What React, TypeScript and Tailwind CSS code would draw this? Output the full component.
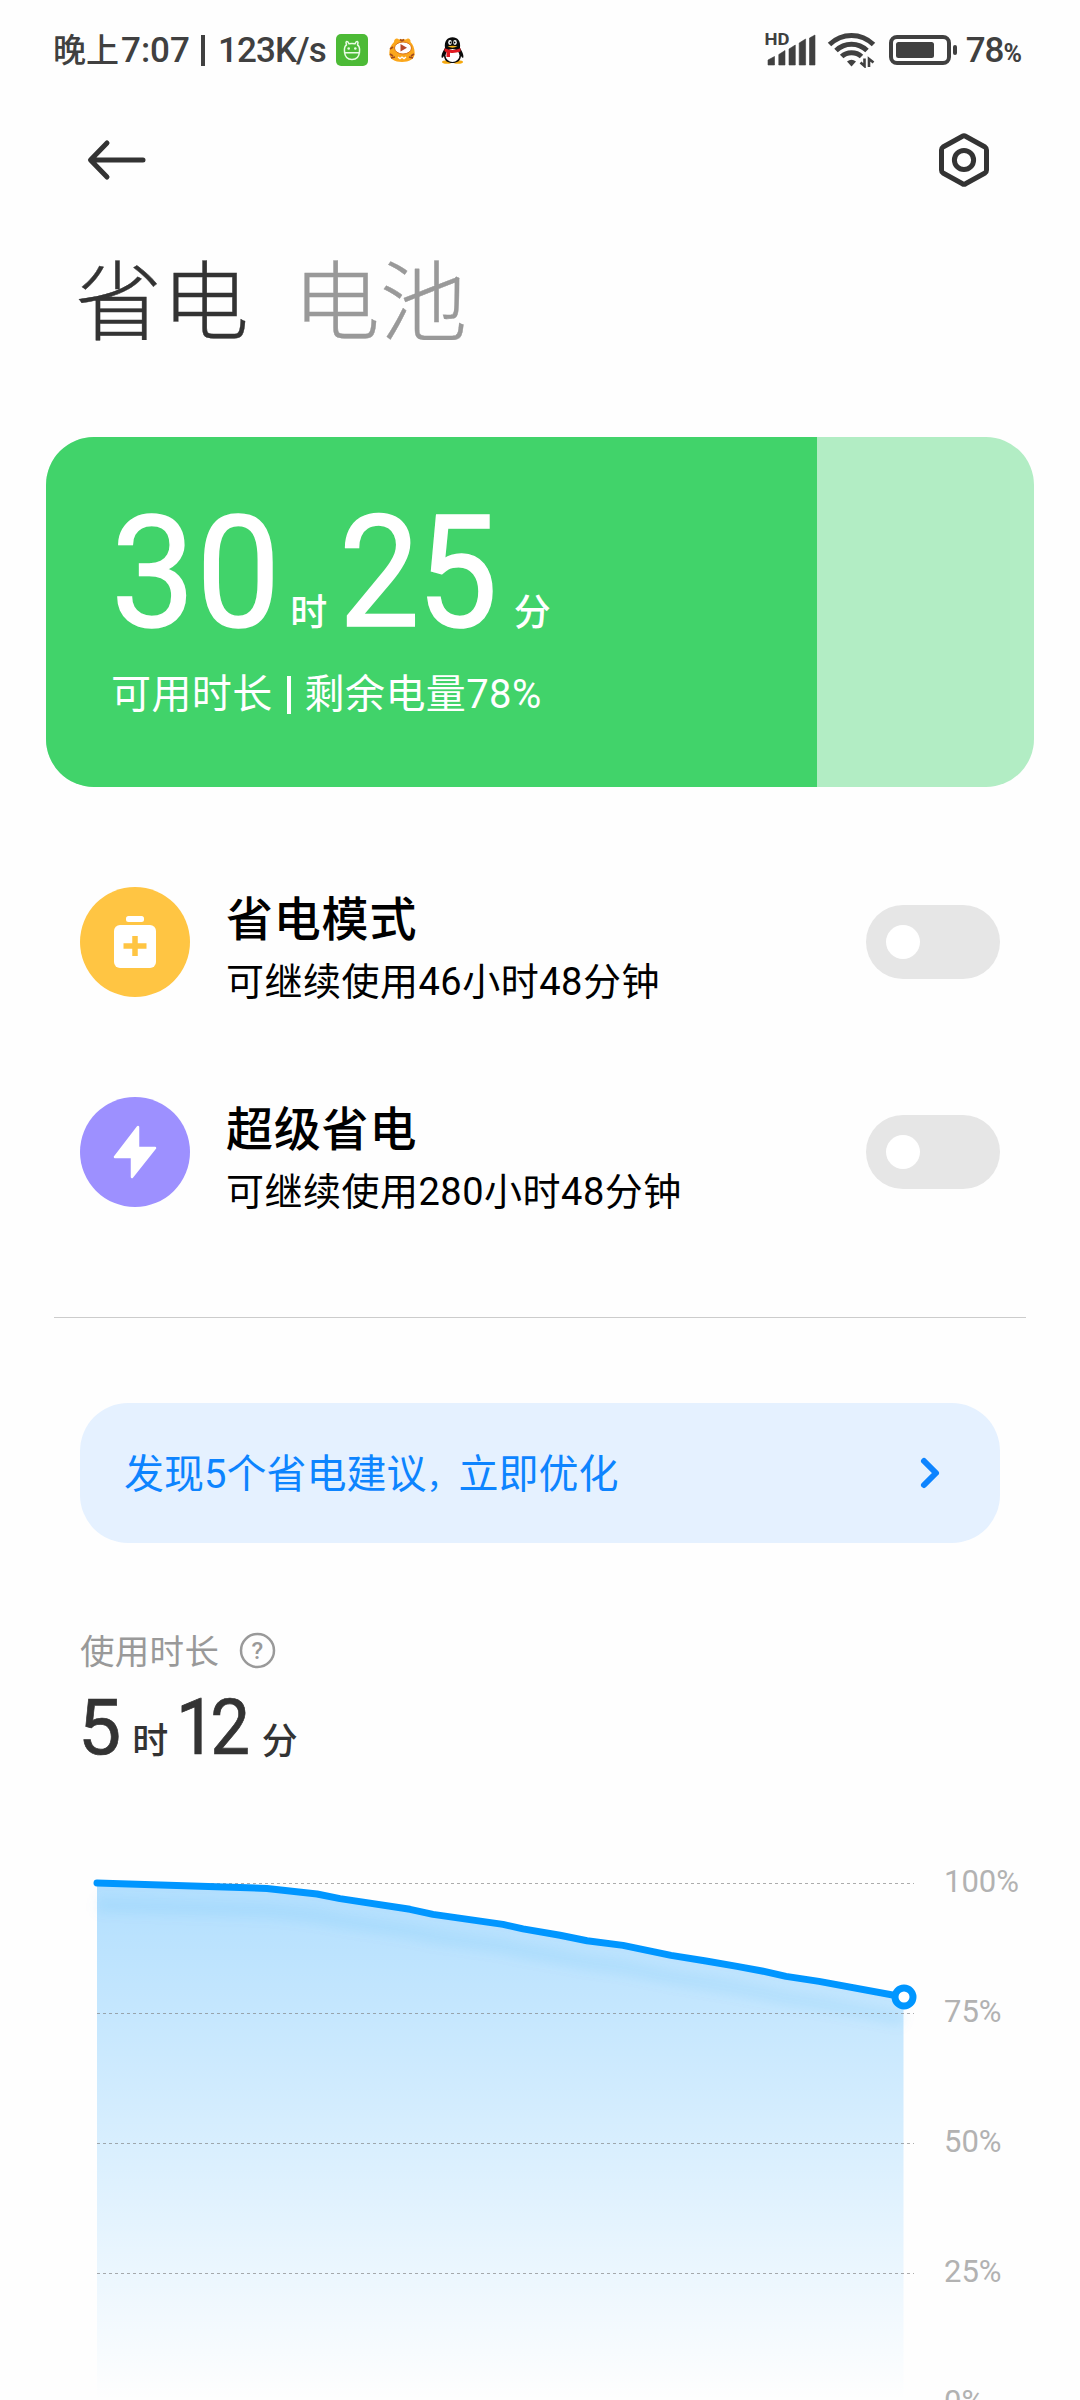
import { useState } from "react"

const points = [
  [97, 1883], [267, 1888.4], [317, 1894], [340, 1898.6], [410, 1909.3], [433, 1914.4],
  [503, 1924.4], [523, 1928.9], [560, 1935.3], [587, 1940.7], [623, 1945.4], [671, 1955.4],
  [706, 1961], [737, 1966.4], [762, 1971], [786, 1976.4], [819, 1981.4], [903.5, 1997],
]

const linePath = "M" + points.map(([x, y]) => `${x} ${y}`).join("L")

const gridLines = [1883.5, 2013.5, 2143.5, 2273.5]

function StatusBar() {
  return (
    <div className="flex h-[100px] items-center pl-[53px] pr-[58px] text-[#404040]">
      <div className="flex items-center text-[35px] font-medium leading-none whitespace-pre">
        <span className="text-[33px]">晚上</span>
        <span className="ml-[2px]">7:07</span>
        <span className="ml-[11px] h-[31px] w-[4px] bg-[#404040]" />
        <span className="ml-[13px] tracking-[-0.9px]">123K/s</span>
      </div>

      {/* Notification icons */}
      <svg className="ml-[10px]" width="32" height="32" viewBox="0 0 32 32">
        <rect width="32" height="32" rx="5" fill="#4CBA36" />
        <g fill="none" stroke="#E9FBE5" strokeWidth="1.5" strokeLinecap="round" strokeLinejoin="round">
          <path d="M8.500 17.500Q8 12.500 10.500 11L10 8.500Q10.500 6.800 12 8L13 9.800Q16 9 19 9.800L20 8Q21.500 6.800 22 8.500L21.500 11Q24 12.500 23.500 17.500Q23 25.500 16 25.500Q9 25.500 8.500 17.500Z" />
          <path d="M8.500 18.800H23.500" />
        </g>
        <circle cx="12.700" cy="14.500" r="1.300" fill="#E9FBE5" />
        <circle cx="19.300" cy="14.500" r="1.300" fill="#E9FBE5" />
      </svg>
      <svg className="ml-[21px]" width="26" height="26" viewBox="0 0 26 26">
        <path d="M5 5C5 1.500 8 .5 10 2.500C12 2 14 2 17 2.500C19 .5 22 2 21.500 5C24 7.500 25.500 11 25.700 16C26 22 20 25 13 25C6 25 0 22 .3 16C.5 11 2 8 5 5Z" fill="#FBA71B" />
        <path d="M4 10L1 12M1 17L4 19M25 17L22 19M2 21L6 20M24 21L20 20M11 2.500L13 4L15 2.500" stroke="#A14A1C" strokeWidth="1.600" fill="none" />
        <ellipse cx="14" cy="11" rx="8.500" ry="6" fill="#fff" stroke="#D9741C" strokeWidth="1" />
        <path d="M11.500 7L18 10.800L11.500 14.500Z" fill="#B5472A" />
        <path d="M9 20L11 21.500L13 20L15 21.500L17 20" stroke="#fff" strokeWidth="1.400" fill="none" />
      </svg>
      <svg className="ml-[26px]" width="23" height="27" viewBox="0 0 23 27">
        <ellipse cx="6" cy="25" rx="5" ry="1.800" fill="#F5A90F" />
        <ellipse cx="17" cy="25" rx="5" ry="1.800" fill="#F5A90F" />
        <path d="M4 11C3 4 6.500 .3 11.500 .3C16.500 .3 20 4 19 11C21 14 23 18 22.300 20.500C22 21.500 20.500 20 20 19C19.500 24 16 26 11.500 26C7 26 3.500 24 3 19C2.500 20 1 21.500 .7 20.500C0 18 2 14 4 11Z" fill="#0A0A0A" />
        <ellipse cx="11.500" cy="18.500" rx="7" ry="6.500" fill="#fff" />
        <ellipse cx="9" cy="5.500" rx="1.800" ry="2.400" fill="#fff" />
        <ellipse cx="14" cy="5.500" rx="1.800" ry="2.400" fill="#fff" />
        <circle cx="9.500" cy="5.500" r=".9" />
        <circle cx="13.600" cy="5.500" r=".9" />
        <path d="M6.500 9.300Q11.500 8 16.500 9.300Q11.500 12 6.500 9.300Z" fill="#F5B51B" />
        <path d="M3.500 11.300Q11.500 14.500 19.500 11.300V14.500Q14 16.500 9 15.800V20H5.500V15Q4 14.800 3.500 14Z" fill="#E01B22" />
      </svg>

      {/* Signal, wifi, battery */}
      <div className="ml-auto flex items-center">
        <svg width="54" height="40" viewBox="-3 -4 54 40" fill="#404040">
          <text x="-1.500" y="11" fontSize="17" fontWeight="700" textLength="25" lengthAdjust="spacingAndGlyphs">HD</text>
          <path d="M2 31V26L8.500 22.500V31ZM12.800 31V20.500L19 16.500V31ZM23 31V15L29.300 11V31ZM33.200 31V9L39.600 5V31ZM43.500 31V4L49 1V31Z" stroke="#404040" strokeWidth=".6" strokeLinejoin="round" />
        </svg>
        <svg className="ml-[10px]" width="50" height="36" viewBox="0 0 50 36">
          <g fill="none" stroke="#404040" strokeWidth="5">
            <path d="M2.500 12.500Q12 3.500 24.500 3.500T46.500 12.500" />
            <path d="M9 18.500Q15.500 12.200 24.500 12.200T40 18.500" />
            <path d="M14.700 24.500Q18.500 20.700 24.500 20.700T34.500 24.500" />
          </g>
          <path d="M20 29.500Q24.500 26 29 29.500L24.500 34.500Z" fill="#404040" />
          <path d="M37.500 26.500V34L33.500 30.500M42 35V27L46.500 30.500" fill="none" stroke="#404040" strokeWidth="2.600" />
        </svg>
        <svg className="ml-[11px]" width="70" height="32" viewBox="0 0 70 32">
          <rect x="3" y="3" width="58" height="26" rx="6" fill="none" stroke="#404040" strokeWidth="4" />
          <rect x="8" y="8" width="38" height="16" rx="2.500" fill="#404040" />
          <rect x="65" y="11" width="4" height="10" rx="2" fill="#404040" />
        </svg>
        <div className="ml-[8px] flex items-baseline font-medium leading-none">
          <span className="text-[35px] tracking-[-1px]">78</span>
          <span className="text-[25px] font-bold">%</span>
        </div>
      </div>
    </div>
  )
}

function Toggle({ label }: { label: string }) {
  const [on, setOn] = useState(false)

  return (
    <button
      role="switch"
      aria-checked={on}
      aria-label={label}
      onClick={() => setOn(!on)}
      className={`mt-[18px] ml-auto flex h-[74px] w-[134px] items-center rounded-full px-[20px] ${
        on ? "justify-end bg-[#0D84FF]" : "justify-start bg-[#E6E6E6]"
      }`}
    >
      <span className="h-[34px] w-[34px] rounded-full bg-white" />
    </button>
  )
}

function ModeRow({ icon, title, desc }: { icon: React.ReactNode; title: string; desc: string }) {
  return (
    <div className="flex h-[110px] items-start px-[80px] mt-[100px] text-black">
      {icon}
      <div className="ml-[36px] pt-[2px]">
        <h3 className="text-[47px] font-medium leading-[62px] tracking-[0.8px]">{title}</h3>
        <p className="text-[38px] leading-[62px] tracking-[0.5px]">{desc}</p>
      </div>
      <Toggle label={title} />
    </div>
  )
}

function BatteryCard() {
  return (
    <div className="mx-[46px] flex h-[350px] overflow-hidden rounded-[48px] bg-[#B2EDC4]">
      <div className="w-[78%] bg-[#41D36A] pt-[58px] pl-[65px] text-white whitespace-nowrap">
        <div className="flex items-baseline text-[156px] leading-[156px]">
          <span className="origin-left scale-x-[0.96] tracking-[1px] [-webkit-text-stroke:1.5px_white]">30</span>
          <span className="ml-[2px] text-[37px] leading-none font-medium">时</span>
          <span className="ml-[12px] origin-left scale-x-[0.92] tracking-[-3px] [-webkit-text-stroke:1.5px_white]">25</span>
          <span className="ml-[5px] text-[37px] leading-none font-medium">分</span>
        </div>
        <div className="mt-[24px] flex items-center text-[40px] leading-[40px] tracking-[0.4px]">
          <span>可用时长</span>
          <span className="mx-[14px] h-[38px] w-[4px] bg-white" />
          <span>剩余电量78%</span>
        </div>
      </div>
    </div>
  )
}

function UsageChart() {
  return (
    <div className="mt-[93px] flex">
      <svg className="ml-[80px] shrink-0" width="850" height="540" viewBox="80 1860 850 540">
        <defs>
          <linearGradient id="area" gradientUnits="userSpaceOnUse" x1="0" y1="1883" x2="0" y2="2400">
            <stop offset="0" stopColor="#0096FF" stopOpacity=".3" />
            <stop offset="1" stopColor="#0096FF" stopOpacity="0" />
          </linearGradient>
          <filter id="glow" filterUnits="userSpaceOnUse" x="80" y="1860" width="850" height="200">
            <feGaussianBlur stdDeviation="6" />
          </filter>
        </defs>
        <path d={`${linePath}V2400H97Z`} fill="url(#area)" />
        <path d={linePath} transform="translate(0 22)" fill="none" stroke="#0096E6" strokeOpacity=".08" strokeWidth="14" filter="url(#glow)" />
        {gridLines.map((y) => (
          <line key={y} x1="97" x2="914" y1={y} y2={y} stroke="#808080" strokeOpacity=".65" strokeDasharray="3 3" />
        ))}
        <path d={linePath} fill="none" stroke="#0096FF" strokeWidth="7" strokeLinecap="round" strokeLinejoin="round" />
        <circle cx="904" cy="1997" r="9" fill="#fff" stroke="#0096FF" strokeWidth="7" />
      </svg>
      <div className="ml-[14px] text-[31px] leading-[44px] text-[#B2B2B2]">
        {["100%", "75%", "50%", "25%", "0%"].map((label) => (
          <div key={label} className="h-[130px]">{label}</div>
        ))}
      </div>
    </div>
  )
}

export default function App() {
  return (
    <div className="h-[2400px] w-[1080px] overflow-hidden bg-[#FEFEFE] font-['Roboto','Noto_Sans_CJK_SC',sans-serif] text-[#333]">
      <StatusBar />

      {/* Header */}
      <div className="flex h-[120px] items-center justify-between pl-[86px] pr-[88px]">
        <svg width="62" height="44" viewBox="0 0 62 44" fill="none" stroke="#333" strokeWidth="5" strokeLinecap="round" strokeLinejoin="round">
          <path d="M57 22H5M21 5L4.500 22L21 39" />
        </svg>
        <svg width="56" height="60" viewBox="0 0 56 60" fill="none" stroke="#333" strokeWidth="5" strokeLinejoin="round">
          <path d="M26.500 6.200Q28 5.200 29.500 6.200L49 17Q50.500 18 50.500 20V40Q50.500 42 49 43L29.500 53.800Q28 54.800 26.500 53.800L7 43Q5.500 42 5.500 40V20Q5.500 18 7 17Z" />
          <circle cx="28" cy="30" r="9.600" />
        </svg>
      </div>

      <div className="flex h-[217px] gap-[44px] pl-[75px] text-[87px] font-light leading-[168px] [-webkit-text-stroke:0.4px]">
        <h1>省电</h1>
        <span className="text-[#999]">电池</span>
      </div>

      <BatteryCard />

      <ModeRow
        title="省电模式"
        desc="可继续使用46小时48分钟"
        icon={
          <svg width="110" height="110" viewBox="0 0 110 110">
            <circle cx="55" cy="55" r="55" fill="#FFC543" />
            <rect x="46" y="29" width="18" height="6" rx="2.500" fill="#fff" />
            <rect x="34" y="38" width="42" height="43" rx="6" fill="#fff" />
            <path d="M55 49V69M43.500 59H66.500" stroke="#FFC543" strokeWidth="5.500" />
          </svg>
        }
      />
      <ModeRow
        title="超级省电"
        desc="可继续使用280小时48分钟"
        icon={
          <svg width="110" height="110" viewBox="0 0 110 110">
            <circle cx="55" cy="55" r="55" fill="#9D90FF" />
            <path d="M58 30V51H75L52 80V60H35Z" fill="#fff" stroke="#fff" strokeWidth="2.500" strokeLinejoin="round" />
          </svg>
        }
      />

      <div className="mx-[54px] mt-[110px] h-px bg-[#CCC]" />

      {/* Suggestion banner */}
      <button className="mx-[80px] mt-[85px] flex h-[140px] w-[920px] items-center justify-between rounded-[48px] bg-[#E5F1FF] pl-[44px] pr-[58px] text-[40px] text-[#0D84FF]">
        <span className="pt-[4px]">
          发现5个省电建议<span className="text-[32px]">，</span>立即优化
        </span>
        <svg width="24" height="36" viewBox="0 0 24 36" fill="none" stroke="#0D84FF" strokeWidth="6" strokeLinecap="round" strokeLinejoin="round">
          <path d="M6 6L18 18L6 30" />
        </svg>
      </button>

      {/* Usage time */}
      <div className="mt-[89px] flex h-[40px] items-center pl-[80px] text-[34.5px] leading-[40px] tracking-[0.3px] text-[#999]">
        <span>使用时长</span>
        <svg className="ml-[20px] mb-[4px]" width="37" height="37" viewBox="0 0 37 37">
          <circle cx="18.500" cy="18.500" r="16.500" fill="none" stroke="#999" strokeWidth="2.500" />
          <text x="18.500" y="27" textAnchor="middle" fontSize="24" fontWeight="500" fill="#999">?</text>
        </svg>
      </div>
      <div className="mt-[18px] flex items-baseline pl-[78px] text-[77px] leading-[77px]">
        <span className="[-webkit-text-stroke:0.7px]">5</span>
        <span className="ml-[11px] text-[36px] leading-none font-medium">时</span>
        <span className="ml-[8px] origin-left scale-x-[0.92] tracking-[-6px] [-webkit-text-stroke:0.7px]">12</span>
        <span className="ml-[11px] text-[36px] leading-none font-medium">分</span>
      </div>

      <UsageChart />
    </div>
  )
}
